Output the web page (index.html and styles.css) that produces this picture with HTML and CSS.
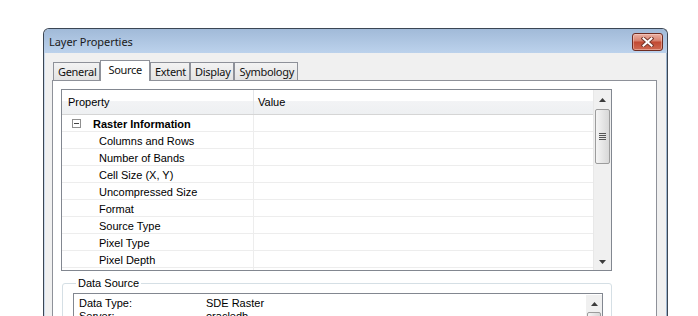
FILE: index.html
```html
<!DOCTYPE html>
<html>
<head>
<meta charset="utf-8">
<title>Layer Properties</title>
<link rel="stylesheet" href="styles.css">
</head>
<body>
<div class="window">
  <div class="titlebar">
    <span class="title">Layer Properties</span>
    <button class="close" aria-label="Close">
      <svg width="13" height="10" viewBox="0 0 13 10">
        <path d="M2.5 1.5 L10.5 8.5 M10.5 1.5 L2.5 8.5" stroke="#7a3a2e" stroke-width="4" stroke-linecap="square" fill="none"/>
        <path d="M2.5 1.5 L10.5 8.5 M10.5 1.5 L2.5 8.5" stroke="#ffffff" stroke-width="2" stroke-linecap="square" fill="none"/>
      </svg>
    </button>
  </div>
  <div class="content">
    <div class="tabs">
      <div class="tab">General</div>
      <div class="tab tab-active">Source</div>
      <div class="tab">Extent</div>
      <div class="tab">Display</div>
      <div class="tab">Symbology</div>
    </div>
    <div class="panel">
      <div class="grid">
        <div class="grid-main">
          <div class="grid-head">
            <div class="cell-prop">Property</div>
            <div class="cell-val">Value</div>
          </div>
          <div class="grid-row grid-cat">
            <div class="cell-prop"><span class="minus"></span><b>Raster Information</b></div>
            <div class="cell-val"></div>
          </div>
          <div class="grid-row"><div class="cell-prop sub">Columns and Rows</div><div class="cell-val"></div></div>
          <div class="grid-row"><div class="cell-prop sub">Number of Bands</div><div class="cell-val"></div></div>
          <div class="grid-row"><div class="cell-prop sub">Cell Size (X, Y)</div><div class="cell-val"></div></div>
          <div class="grid-row"><div class="cell-prop sub">Uncompressed Size</div><div class="cell-val"></div></div>
          <div class="grid-row"><div class="cell-prop sub">Format</div><div class="cell-val"></div></div>
          <div class="grid-row"><div class="cell-prop sub">Source Type</div><div class="cell-val"></div></div>
          <div class="grid-row"><div class="cell-prop sub">Pixel Type</div><div class="cell-val"></div></div>
          <div class="grid-row"><div class="cell-prop sub">Pixel Depth</div><div class="cell-val"></div></div>
          <div class="grid-row"><div class="cell-prop sub"></div><div class="cell-val"></div></div>
        </div>
        <div class="vscroll">
          <div class="arrow arrow-up">
            <svg width="7" height="4" viewBox="0 0 7 4"><path d="M0 4 L3.5 0 L7 4 Z" fill="#3c3c3c"/></svg>
          </div>
          <div class="track">
            <div class="thumb"><span class="grip"></span></div>
          </div>
          <div class="arrow">
            <svg width="7" height="4" viewBox="0 0 7 4"><path d="M0 0 L7 0 L3.5 4 Z" fill="#3c3c3c"/></svg>
          </div>
        </div>
      </div>
      <fieldset class="group">
        <legend>Data Source</legend>
        <div class="list">
          <div class="list-main">
            <div class="list-row"><span class="list-key">Data Type:</span><span>SDE Raster</span></div>
            <div class="list-row"><span class="list-key">Server:</span><span>oracledb</span></div>
            <div class="list-row"><span class="list-key">Instance:</span><span>sde:oracle11g</span></div>
          </div>
          <div class="vscroll small">
            <div class="arrow">
              <svg width="7" height="4" viewBox="0 0 7 4"><path d="M0 4 L3.5 0 L7 4 Z" fill="#3c3c3c"/></svg>
            </div>
            <div class="track">
              <div class="thumb"></div>
            </div>
          </div>
        </div>
      </fieldset>
    </div>
  </div>
</div>
</body>
</html>
```
FILE: styles.css
```css
html, body {
  margin: 0;
  padding: 0;
  background: #ffffff;
  overflow: hidden;
}
body {
  font-family: "Liberation Sans", Arial, sans-serif;
  font-size: 11px;
  color: #000;
}
.window {
  margin: 28px 0 0 43px;
  width: 625px;
  height: 320px;
  box-sizing: border-box;
  border: 1px solid #3b4654;
  border-bottom: none;
  border-radius: 6px 6px 0 0;
  background: #f0f0f0;
  overflow: hidden;
  box-shadow: inset -1px 0 0 #9fb6cf, inset 1px 0 0 #c9d8ea;
}
.titlebar {
  height: 24px;
  background: linear-gradient(#a1bad8, #bcd2ec);
  display: flex;
  justify-content: space-between;
  align-items: flex-start;
  padding: 0 4px 0 5px;
  border-radius: 5px 5px 0 0;
}
.title {
  font-family: "Noto Sans", "Liberation Sans", sans-serif;
  font-size: 11px;
  line-height: 25px;
  color: #1a1a1a;
  letter-spacing: -0.05px;
}
.close {
  margin-top: 4px;
  width: 31px;
  height: 18px;
  padding: 0;
  border: 1px solid #6e2c22;
  border-radius: 3px;
  background: linear-gradient(#eab0a2 0%, #d98572 40%, #c24a33 52%, #cf6a52 100%);
  box-shadow: inset 0 0 0 1px rgba(255, 220, 210, 0.45);
  display: flex;
  align-items: center;
  justify-content: center;
}
.content {
  padding: 7px 10px 0 8px;
}
.tabs {
  display: flex;
  align-items: flex-end;
  height: 20px;
  padding-left: 1px;
  position: relative;
  z-index: 1;
}
.tab {
  font-family: "Noto Sans", "Liberation Sans", sans-serif;
  font-size: 11px;
  height: 17px;
  line-height: 18px;
  padding: 0 3px 0 4px;
  border: 1px solid #8e9199;
  border-bottom: none;
  background: linear-gradient(#f3f3f3, #e3e3e3);
  color: #111;
  letter-spacing: -0.3px;
}
.tab-active {
  height: 20px;
  line-height: 17px;
  background: #ffffff;
  padding: 0 7px;
  margin-bottom: -1px;
}
.panel {
  border: 1px solid #8e9199;
  background: #ffffff;
  padding: 8px 44px 0 8px;
  height: 300px;
}
.grid {
  display: flex;
  height: 180px;
  border: 1px solid #828790;
}
.grid-main {
  flex: 1;
  overflow: hidden;
}
.grid-head {
  display: flex;
  height: 24px;
  border-bottom: 1px solid #d5d5d5;
  background: linear-gradient(#ffffff 0%, #ffffff 45%, #f2f3f5 48%, #eef0f2 100%);
}
.grid-head .cell-prop {
  border-right: 1px solid #e3e5e8;
  padding-left: 6px;
}
.grid-head .cell-val {
  padding-left: 4px;
}
.cell-prop {
  flex: none;
  display: flex;
  align-items: center;
  width: 192px;
  box-sizing: border-box;
}
.cell-val {
  flex: 1;
  display: flex;
  align-items: center;
}
.grid-row {
  display: flex;
  height: 16px;
  border-bottom: 1px solid #ededed;
}
.grid-row .cell-prop {
  border-right: 1px solid #ededed;
  padding-top: 2px;
}
.grid-cat .cell-prop {
  padding-left: 10px;
}
.grid-cat b {
  font-weight: bold;
  margin-left: 12px;
}
.grid-row .sub {
  padding-left: 37px;
}
.minus {
  width: 9px;
  height: 9px;
  box-sizing: border-box;
  border: 1px solid #8f8f8f;
  background: linear-gradient(#ffffff 0 3px, transparent 3px 4px, #ffffff 4px);
  background-color: #444;
  background-clip: content-box;
  padding: 0 1px;
  margin-top: -1px;
}
.vscroll {
  width: 17px;
  flex: none;
  display: flex;
  flex-direction: column;
  background: #f0f0f0;
  border-left: 1px solid #e8e8e8;
}
.arrow {
  height: 17px;
  display: flex;
  align-items: center;
  justify-content: center;
  flex: none;
}
.arrow-up {
  height: 19px;
}
.track {
  flex: 1;
  padding: 0 1px;
}
.thumb {
  height: 55px;
  box-sizing: border-box;
  border: 1px solid #9c9c9c;
  border-radius: 2px;
  background: linear-gradient(90deg, #f5f5f5, #e6e6e6 50%, #d8d8d8);
  display: flex;
  align-items: center;
  justify-content: center;
}
.grip {
  width: 7px;
  height: 7px;
  background: repeating-linear-gradient(#555 0 1px, transparent 1px 2px);
}
.group {
  margin: 6px 0 0 1px;
  padding: 4px 8px 0 10px;
  border: 1px solid #d5dfe5;
  border-radius: 3px;
  height: 60px;
  box-sizing: border-box;
  min-width: 0;
}
.group legend {
  padding: 0 2px;
  margin-left: 3px;
  color: #000;
}
.list {
  border: 1px solid #828790;
  height: 60px;
  display: flex;
  background: #fff;
}
.list-main {
  flex: 1;
  padding: 2px 0 0 5px;
}
.list-row {
  display: flex;
  height: 13px;
  align-items: center;
}
.list-key {
  width: 127px;
}
.vscroll.small {
  width: 16px;
  border-left: none;
  margin: 1px 0;
}
.vscroll.small .thumb {
  height: 40px;
}
```
